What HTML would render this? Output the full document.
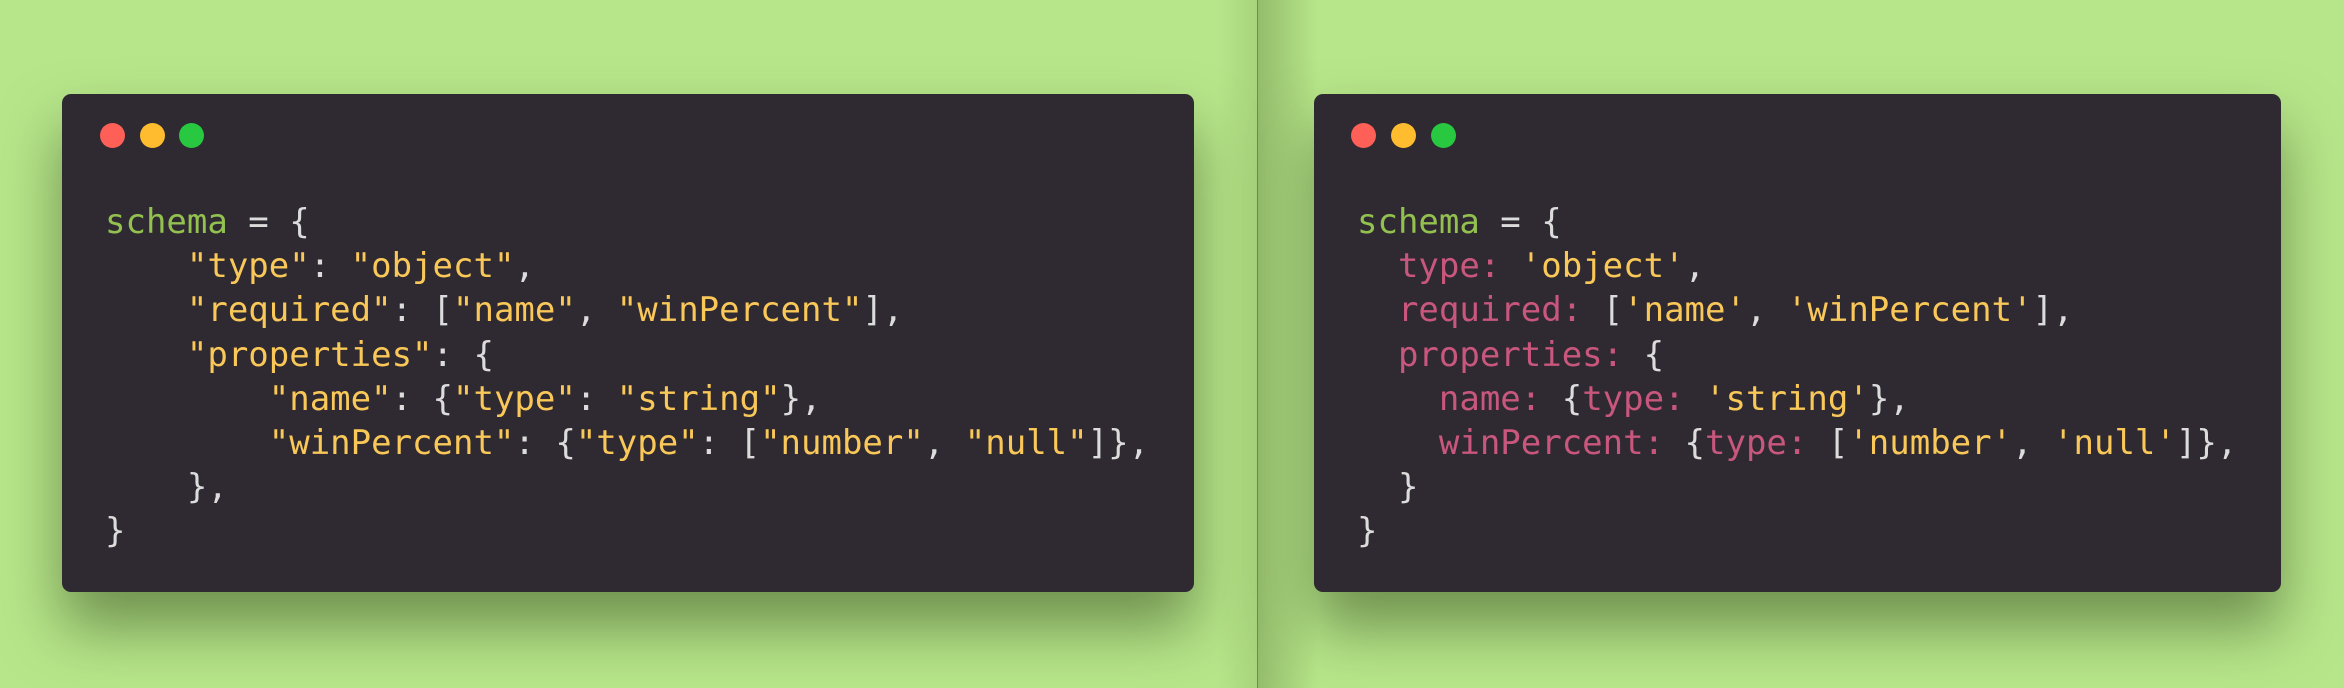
<!DOCTYPE html>
<html><head><meta charset="utf-8"><style>
html,body{margin:0;padding:0;}
body{width:2344px;height:688px;background:#b7e68a;position:relative;overflow:hidden;font-family:"DejaVu Sans Mono","Liberation Mono",monospace;}
.line{position:absolute;left:1257px;top:0;width:1px;height:688px;background:#6f8c55;}
.rs{position:absolute;left:1258px;top:0;width:60px;height:688px;background:linear-gradient(90deg,rgba(60,80,30,.28),rgba(60,80,30,0));}
.ls{position:absolute;left:1217px;top:0;width:40px;height:688px;background:linear-gradient(270deg,rgba(60,80,30,.12),rgba(60,80,30,0));}
.card{position:absolute;top:94px;height:498px;background:#2f2a31;border-radius:9px;box-shadow:0 35px 60px rgba(40,60,20,.5);}
.dot{position:absolute;top:123px;width:25px;height:25px;border-radius:50%;}
.r{background:#fe5f57}.y{background:#febc2e}.g{background:#28c840}
pre{position:absolute;top:200px;margin:0;font-family:"DejaVu Sans Mono","Liberation Mono",monospace;font-size:34px;line-height:44.2px;color:#dcdcdc;}
.v{color:#93c14f}.s{color:#f9c859}.k{color:#c9577d}
</style></head><body>
<div class="ls"></div>
<div class="line"></div>
<div class="rs"></div>
<div class="card" style="left:62px;width:1132px"></div>
<div class="card" style="left:1314px;width:967px"></div>
<div class="dot r" style="left:100px"></div><div class="dot y" style="left:140px"></div><div class="dot g" style="left:179px"></div>
<div class="dot r" style="left:1351px"></div><div class="dot y" style="left:1391px"></div><div class="dot g" style="left:1431px"></div>
<pre style="left:105px"><span class="v">schema</span> = {
    <span class="s">"type"</span>: <span class="s">"object"</span>,
    <span class="s">"required"</span>: [<span class="s">"name"</span>, <span class="s">"winPercent"</span>],
    <span class="s">"properties"</span>: {
        <span class="s">"name"</span>: {<span class="s">"type"</span>: <span class="s">"string"</span>},
        <span class="s">"winPercent"</span>: {<span class="s">"type"</span>: [<span class="s">"number"</span>, <span class="s">"null"</span>]},
    },
}</pre>
<pre style="left:1357px"><span class="v">schema</span> = {
  <span class="k">type:</span> <span class="s">'object'</span>,
  <span class="k">required:</span> [<span class="s">'name'</span>, <span class="s">'winPercent'</span>],
  <span class="k">properties:</span> {
    <span class="k">name:</span> {<span class="k">type:</span> <span class="s">'string'</span>},
    <span class="k">winPercent:</span> {<span class="k">type:</span> [<span class="s">'number'</span>, <span class="s">'null'</span>]},
  }
}</pre>
</body></html>
